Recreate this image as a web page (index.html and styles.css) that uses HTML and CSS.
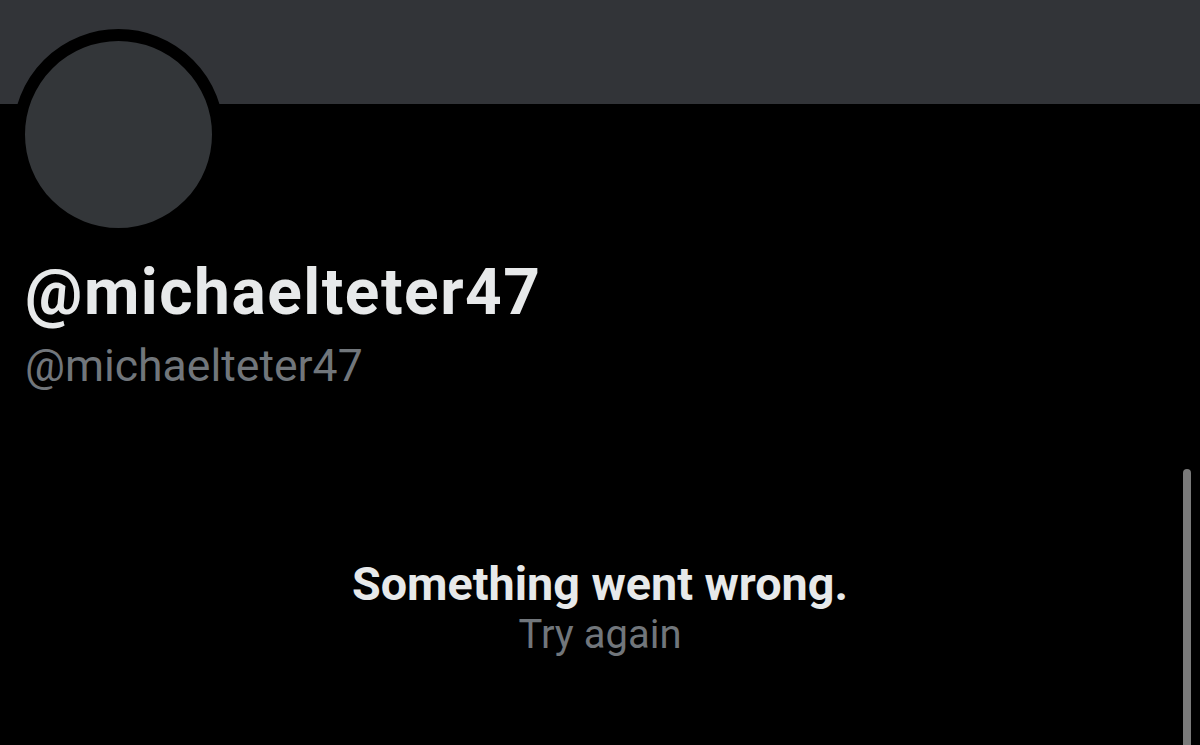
FILE: index.html
```html
<!DOCTYPE html>
<html lang="en">
<head>
    <meta charset="UTF-8">
    <title>@michaelteter47</title>
    <link rel="stylesheet" href="styles.css">
</head>
<body>
    <div class="banner"></div>

    <div class="profile">
        <div class="avatar"></div>
        <div class="display-name">@michaelteter47</div>
        <div class="handle">@michaelteter47</div>
    </div>

    <div class="error-box">
        <div class="error-title">Something went wrong.</div>
        <div class="error-retry">Try again</div>
    </div>

    <div class="scrollbar"></div>
</body>
</html>
```

FILE: styles.css
```css
body {
    margin: 0;
    background-color: #000;
    font-family: Roboto, "Liberation Sans", sans-serif;
    height: 745px;
    overflow: hidden;
}

.banner {
    height: 104px;
    background-color: #323438;
}

.profile {
    padding-left: 13px;
}

.avatar {
    width: 187px;
    height: 187px;
    margin-top: -75px;
    border: 12px solid #000;
    border-radius: 50%;
    background-color: #333639;
}

.display-name {
    margin-top: 16px;
    padding-left: 12px;
    color: #e7e9ea;
    font-size: 64px;
    font-weight: 700;
    letter-spacing: 1.5px;
    line-height: 74px;
}

.handle {
    margin-top: 8px;
    padding-left: 12px;
    color: #71767b;
    font-size: 44.5px;
    line-height: 56px;
}

.error-box {
    margin-top: 164px;
    text-align: center;
}

.error-title {
    color: #e7e9ea;
    font-size: 46.7px;
    font-weight: 700;
    line-height: 52px;
}

.error-retry {
    margin-top: 2px;
    color: #71767b;
    font-size: 40px;
    line-height: 46px;
}

.scrollbar {
    position: absolute;
    top: 469px;
    right: 9px;
    width: 8px;
    height: 290px;
    border-radius: 4px;
    background-color: #7a7a7a;
}
```
